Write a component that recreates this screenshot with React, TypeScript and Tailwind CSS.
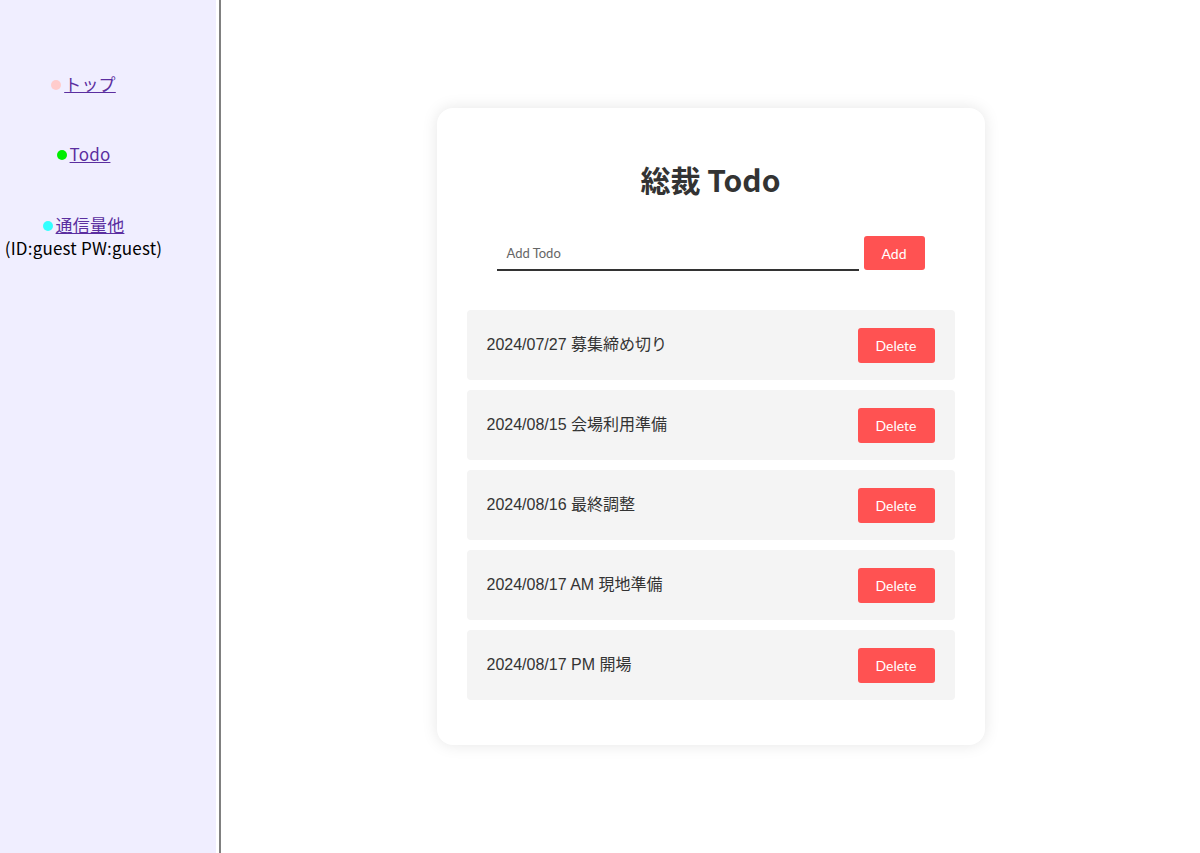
import React from "react";

const todos = [
  "2024/07/27 募集締め切り",
  "2024/08/15 会場利用準備",
  "2024/08/16 最終調整",
  "2024/08/17 AM 現地準備",
  "2024/08/17 PM 開場",
];

function NavItem({ color, label }: { color: string; label: string }) {
  return (
    <div className="flex items-center justify-center">
      <span className="inline-block w-[10px] h-[10px] rounded-full mr-[3px] mt-[2px]" style={{ backgroundColor: color }} />
      <a href="#" className="underline text-[#5b2ea0]">{label}</a>
    </div>
  );
}

export default function App() {
  return (
    <div className="flex w-full h-[853px] bg-white overflow-hidden">
      <aside className="w-[221px] shrink-0 h-full flex border-r-2 border-[#808080]">
        <div className="w-[216px] h-full bg-[#f0eeff]">
          <nav
            className="w-[167px] pt-[72px] flex flex-col items-center text-[17px] leading-[24px] text-black tracking-[0.2px]"
            style={{ fontFamily: '"Noto Sans CJK JP", "Noto Sans", sans-serif' }}
          >
            <NavItem color="#ffcccc" label="トップ" />
            <div className="h-[46px]" />
            <NavItem color="#00ee00" label="Todo" />
            <div className="h-[47px]" />
            <NavItem color="#33ffff" label="通信量他" />
            <div className="whitespace-nowrap mt-[-1px]">(ID:guest PW:guest)</div>
          </nav>
        </div>
        <div className="w-[3px] h-full bg-white" />
      </aside>
      <main className="flex-1 flex items-center justify-center">
        <div
          className="w-[548px] h-[637px] bg-white rounded-[16px] shadow-[0_0_16px_rgba(0,0,0,0.1)] px-[30px] pt-[49px]"
          style={{ fontFamily: 'Roboto, "Noto Sans CJK JP", sans-serif' }}
        >
          <h1
            className="text-center text-[30px] font-bold text-[#333] leading-[44px]"
            style={{ fontFamily: '"Noto Sans CJK JP", sans-serif' }}
          >
            総裁 Todo
          </h1>
          <div className="flex justify-center items-start mt-[34px] gap-[5px]">
            <div className="w-[362px] h-[36px] border-b-2 border-[#333] flex items-center pl-[10px] pt-[3px]">
              <span
                className="text-[13px] text-[#666]"
                style={{ fontFamily: 'Lato, "Noto Sans", sans-serif' }}
              >
                Add Todo
              </span>
            </div>
            <button
              className="w-[61px] h-[34px] mt-[1px] bg-[#ff5252] text-white text-[14px] rounded-[3px]"
              style={{ fontFamily: 'Lato, "Noto Sans", sans-serif' }}
            >
              Add
            </button>
          </div>
          <ul className="mt-[39px] flex flex-col gap-[10px]">
            {todos.map((t) => (
              <li
                key={t}
                className="h-[70px] bg-[#f4f4f4] rounded-[4px] flex items-center justify-between pl-[20px] pr-[20px]"
              >
                <span
                  className="text-[16px] text-[#333] -mt-[1px]"
                  style={{ fontFamily: 'Arimo, "Liberation Sans", "Noto Sans CJK JP", sans-serif' }}
                >
                  {t}
                </span>
                <button
                  className="w-[77px] h-[35px] bg-[#ff5252] text-white text-[14px] rounded-[3px]"
                  style={{ fontFamily: 'Lato, "Noto Sans", sans-serif' }}
                >
                  Delete
                </button>
              </li>
            ))}
          </ul>
        </div>
      </main>
    </div>
  );
}
